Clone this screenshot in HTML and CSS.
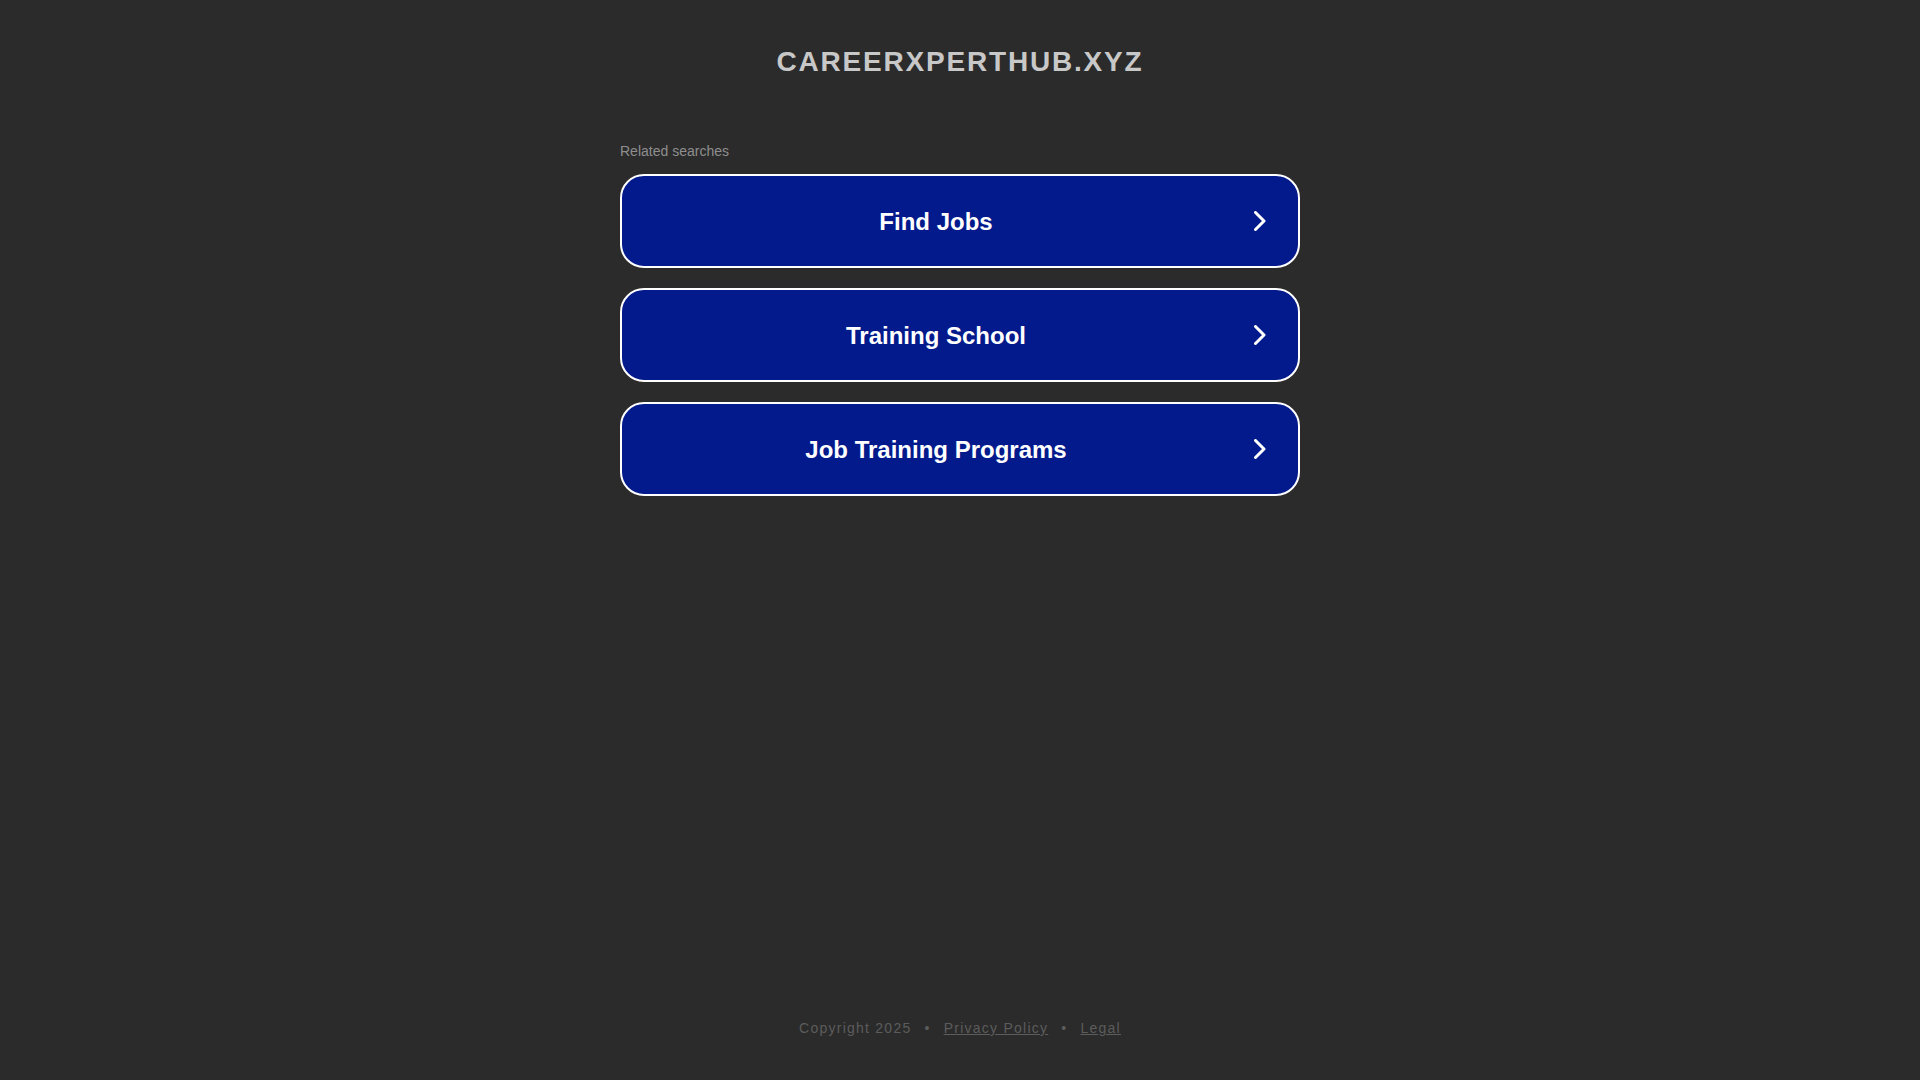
FILE: index.html
```html
<!DOCTYPE html>
<html lang="en">
<head>
<meta charset="utf-8">
<title>careerxperthub.xyz</title>
<link rel="stylesheet" href="styles.css">
</head>
<body>
<div class="page">
  <header class="header">
    <h1 class="domain">CAREERXPERTHUB.XYZ</h1>
  </header>
  <main class="main">
    <div class="related">
      <p class="related-title">Related searches</p>
      <ul class="links">
        <li><a class="btn" href="#"><span class="label">Find Jobs</span><svg class="chev" viewBox="0 0 12 20" width="12" height="20"><polyline points="1.5,1.5 10,10 1.5,18.5"/></svg></a></li>
        <li><a class="btn" href="#"><span class="label">Training School</span><svg class="chev" viewBox="0 0 12 20" width="12" height="20"><polyline points="1.5,1.5 10,10 1.5,18.5"/></svg></a></li>
        <li><a class="btn" href="#"><span class="label">Job Training Programs</span><svg class="chev" viewBox="0 0 12 20" width="12" height="20"><polyline points="1.5,1.5 10,10 1.5,18.5"/></svg></a></li>
      </ul>
    </div>
  </main>
  <footer class="footer">
    <span>Copyright 2025</span><span class="dot">•</span><a href="#">Privacy Policy</a><span class="dot">•</span><a href="#">Legal</a>
  </footer>
</div>
</body>
</html>
```
FILE: styles.css
```css
html, body {
  margin: 0;
  padding: 0;
}
body {
  background: #2b2b2b;
  font-family: "Liberation Sans", Arial, Helvetica, sans-serif;
}
.page {
  min-height: 100vh;
  display: flex;
  flex-direction: column;
}
.header {
  padding-top: 46px;
  text-align: center;
}
.domain {
  margin: 0;
  font-size: 28px;
  line-height: 32px;
  font-weight: bold;
  letter-spacing: 1.8px;
  color: #c8c8c8;
}
.main {
  flex: 1;
  display: flex;
  justify-content: center;
}
.related {
  width: 680px;
  padding-top: 65px;
}
.related-title {
  margin: 0 0 15px 0;
  font-size: 14px;
  line-height: 16px;
  color: #8e8e8e;
}
.links {
  list-style: none;
  margin: 0;
  padding: 0;
  display: flex;
  flex-direction: column;
  gap: 20px;
}
.btn {
  box-sizing: border-box;
  height: 94px;
  display: flex;
  align-items: center;
  background: #021a8b;
  border: 2px solid #ffffff;
  border-radius: 24px;
  text-decoration: none;
  color: #ffffff;
}
.label {
  flex: 1;
  padding-top: 2px;
  text-align: center;
  font-size: 24px;
  font-weight: bold;
}
.chev {
  margin: 0 32px 0 4px;
  fill: none;
  stroke: #ffffff;
  stroke-width: 3;
  stroke-linecap: round;
  stroke-linejoin: round;
}
.footer {
  padding: 0 0 44px;
  text-align: center;
  font-size: 14px;
  line-height: 16px;
  letter-spacing: 1.25px;
  color: #5c5c5c;
}
.footer a {
  color: #5c5c5c;
}
.dot {
  padding: 0 13px;
}
```
